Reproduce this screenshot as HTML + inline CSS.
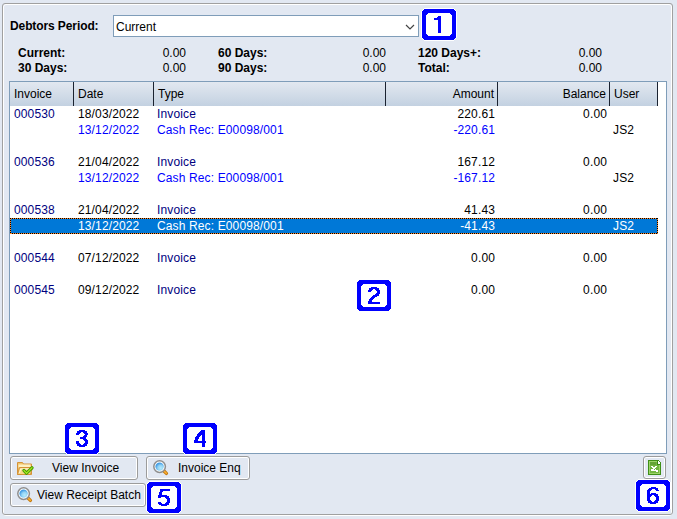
<!DOCTYPE html>
<html><head><meta charset="utf-8">
<style>
html,body{margin:0;padding:0;}
body{width:677px;height:519px;position:relative;overflow:hidden;background:#e2e8f2;font-family:"Liberation Sans",sans-serif;font-size:12px;color:#000;}
.a{position:absolute;}
.t{position:absolute;white-space:pre;line-height:14px;font-size:12px;}
.b{font-weight:bold;}
.r{text-align:right;}
.nv{color:#000080;}
.bl{color:#0000ff;}
.sel{color:#fff;}
.g{letter-spacing:0.13px;}
.hdr{position:absolute;top:82px;height:24px;background:linear-gradient(#e2e8f0,#c3d1e1);}
.sep{position:absolute;top:82px;width:1px;height:24px;background:#1a2230;}
.btn{position:absolute;box-sizing:border-box;border:1px solid #9c9c9c;border-radius:3px;background:#e2e8f2;box-shadow:inset 0 0 0 1px #fff;}
.lbl{position:absolute;box-sizing:border-box;width:34px;height:31px;border:4px solid #0000ff;border-radius:4px;background:#fff;outline:1px solid #fff;color:#0000ff;font-weight:bold;font-size:23px;line-height:23px;text-align:center;}
</style></head><body>
<!-- panel etched border -->
<div class="a" style="left:3px;top:4px;width:667px;height:510px;border:1px solid #fff;border-radius:3px;"></div>
<div class="a" style="left:2px;top:3px;width:669px;height:510px;border:1px solid #a0a0a0;border-radius:3px;"></div>

<div class="t b" style="left:10px;top:19px;letter-spacing:-0.1px;">Debtors Period:</div>
<div class="a" style="left:113px;top:15px;width:304px;height:20px;border:1px solid #7f9db9;background:#fff;"></div>
<div class="t" style="left:116px;top:20px;">Current</div>
<svg class="a" style="left:405px;top:24px;" width="10" height="7" viewBox="0 0 10 7"><path d="M1 1 L5 5 L9 1" fill="none" stroke="#444" stroke-width="1.2"/></svg>

<div class="t b" style="left:18px;top:46px;">Current:</div>
<div class="t b" style="left:18px;top:61px;">30 Days:</div>
<div class="t r" style="left:100px;width:86px;top:46px;">0.00</div>
<div class="t r" style="left:100px;width:86px;top:61px;">0.00</div>
<div class="t b" style="left:218px;top:46px;">60 Days:</div>
<div class="t b" style="left:218px;top:61px;">90 Days:</div>
<div class="t r" style="left:300px;width:86px;top:46px;">0.00</div>
<div class="t r" style="left:300px;width:86px;top:61px;">0.00</div>
<div class="t b" style="left:418px;top:46px;">120 Days+:</div>
<div class="t b" style="left:418px;top:61px;">Total:</div>
<div class="t r" style="left:516px;width:86px;top:46px;">0.00</div>
<div class="t r" style="left:516px;width:86px;top:61px;">0.00</div>

<!-- grid -->
<div class="a" style="left:9px;top:81px;width:656px;height:371px;border:1px solid #7f9db9;background:#fff;"></div>
<div class="hdr" style="left:10px;width:647px;"></div>
<div class="sep" style="left:73px;"></div>
<div class="sep" style="left:153px;"></div>
<div class="sep" style="left:385px;"></div>
<div class="sep" style="left:497px;"></div>
<div class="sep" style="left:609px;"></div>
<div class="sep" style="left:657px;"></div>
<div class="t" style="left:14px;top:87px;">Invoice</div>
<div class="t" style="left:78px;top:87px;">Date</div>
<div class="t" style="left:158px;top:87px;">Type</div>
<div class="t r" style="left:390px;width:104px;top:87px;">Amount</div>
<div class="t r" style="left:500px;width:106px;top:87px;">Balance</div>
<div class="t" style="left:614px;top:87px;">User</div>

<!--ROWS-->
<div class="a" style="left:10px;top:218px;width:648px;height:16px;background:#0078d7;"></div>
<div class="a" style="left:10px;top:218px;width:648px;height:1px;background:repeating-linear-gradient(90deg,#000 0 1px,#ff8828 1px 2px);"></div>
<div class="a" style="left:10px;top:233px;width:648px;height:1px;background:repeating-linear-gradient(90deg,#000 0 1px,#ff8828 1px 2px);"></div>
<div class="a" style="left:10px;top:218px;width:1px;height:16px;background:repeating-linear-gradient(180deg,#000 0 1px,#ff8828 1px 2px);"></div>
<div class="a" style="left:657px;top:218px;width:1px;height:16px;background:repeating-linear-gradient(180deg,#000 0 1px,#ff8828 1px 2px);"></div>
<div class="t g nv" style="left:14px;top:107px;">000530</div>
<div class="t g" style="left:78px;top:107px;">18/03/2022</div>
<div class="t g nv" style="left:157px;top:107px;">Invoice</div>
<div class="t r g" style="left:385px;width:110px;top:107px;">220.61</div>
<div class="t r g" style="left:497px;width:110px;top:107px;">0.00</div>
<div class="t g bl" style="left:78px;top:123px;">13/12/2022</div>
<div class="t g bl" style="left:157px;top:123px;">Cash Rec: E00098/001</div>
<div class="t r g bl" style="left:385px;width:110px;top:123px;">-220.61</div>
<div class="t g" style="left:613px;top:123px;">JS2</div>
<div class="t g nv" style="left:14px;top:155px;">000536</div>
<div class="t g" style="left:78px;top:155px;">21/04/2022</div>
<div class="t g nv" style="left:157px;top:155px;">Invoice</div>
<div class="t r g" style="left:385px;width:110px;top:155px;">167.12</div>
<div class="t r g" style="left:497px;width:110px;top:155px;">0.00</div>
<div class="t g bl" style="left:78px;top:171px;">13/12/2022</div>
<div class="t g bl" style="left:157px;top:171px;">Cash Rec: E00098/001</div>
<div class="t r g bl" style="left:385px;width:110px;top:171px;">-167.12</div>
<div class="t g" style="left:613px;top:171px;">JS2</div>
<div class="t g nv" style="left:14px;top:203px;">000538</div>
<div class="t g" style="left:78px;top:203px;">21/04/2022</div>
<div class="t g nv" style="left:157px;top:203px;">Invoice</div>
<div class="t r g" style="left:385px;width:110px;top:203px;">41.43</div>
<div class="t r g" style="left:497px;width:110px;top:203px;">0.00</div>
<div class="t g sel" style="left:78px;top:219px;">13/12/2022</div>
<div class="t g sel" style="left:157px;top:219px;">Cash Rec: E00098/001</div>
<div class="t r g sel" style="left:385px;width:110px;top:219px;">-41.43</div>
<div class="t g sel" style="left:613px;top:219px;">JS2</div>
<div class="t g nv" style="left:14px;top:251px;">000544</div>
<div class="t g" style="left:78px;top:251px;">07/12/2022</div>
<div class="t g nv" style="left:157px;top:251px;">Invoice</div>
<div class="t r g" style="left:385px;width:110px;top:251px;">0.00</div>
<div class="t r g" style="left:497px;width:110px;top:251px;">0.00</div>
<div class="t g nv" style="left:14px;top:283px;">000545</div>
<div class="t g" style="left:78px;top:283px;">09/12/2022</div>
<div class="t g nv" style="left:157px;top:283px;">Invoice</div>
<div class="t r g" style="left:385px;width:110px;top:283px;">0.00</div>
<div class="t r g" style="left:497px;width:110px;top:283px;">0.00</div>
<!--/ROWS-->

<!-- buttons -->
<div class="btn" style="left:10px;top:456px;width:128px;height:24px;"></div>
<div class="t" style="left:52px;top:461px;">View Invoice</div>
<svg class="a" style="left:17px;top:460px;" width="17" height="17" viewBox="0 0 17 17"><path d="M0.5,2.5 H5.5 L6.5,4 H14.5 V14.5 H0.5 Z" fill="#f2c66a" stroke="#d49238"/><rect x="1.5" y="4.5" width="12" height="3" fill="#fdf0c0"/><path d="M0.5,14.5 L2.5,7.5 H15.5 L13.5,14.5 Z" fill="#f8d888" stroke="#d49238"/><path d="M2.5,13 L3.6,9 H13" stroke="#fff6d8" fill="none"/><polyline points="7,10.5 9.5,13.2 15,7.8" fill="none" stroke="#3a9a00" stroke-width="3.2" stroke-linecap="round" stroke-linejoin="round"/><polyline points="7,10.5 9.5,13.2 15,7.8" fill="none" stroke="#a4e21c" stroke-width="1.3" stroke-linecap="round" stroke-linejoin="round"/></svg>
<div class="btn" style="left:146px;top:456px;width:104px;height:24px;"></div>
<div class="t" style="left:178px;top:461px;">Invoice Enq</div>
<svg class="a" style="left:153px;top:460px;" width="16" height="16" viewBox="0 0 16 16"><defs><radialGradient id="mg153" cx="0.62" cy="0.68" r="0.62"><stop offset="0" stop-color="#b4ecfc"/><stop offset="0.55" stop-color="#92d2f4"/><stop offset="1" stop-color="#3e9ae4"/></radialGradient></defs><path d="M11.2,11.2 L13.4,13.4" stroke="#c47c12" stroke-width="3.4" stroke-linecap="round"/><path d="M11.5,11.5 L13.3,13.3" stroke="#ffb030" stroke-width="1.4" stroke-linecap="round"/><circle cx="6.6" cy="6.6" r="5.8" fill="#fff" stroke="#8e8e8e" stroke-width="1.5"/><circle cx="6.6" cy="6.6" r="4.2" fill="url(#mg153)"/></svg>
<div class="btn" style="left:10px;top:483px;width:136px;height:24px;"></div>
<div class="t" style="left:37px;top:488px;">View Receipt Batch</div>
<svg class="a" style="left:17px;top:487px;" width="16" height="16" viewBox="0 0 16 16"><defs><radialGradient id="mg17" cx="0.62" cy="0.68" r="0.62"><stop offset="0" stop-color="#b4ecfc"/><stop offset="0.55" stop-color="#92d2f4"/><stop offset="1" stop-color="#3e9ae4"/></radialGradient></defs><path d="M11.2,11.2 L13.4,13.4" stroke="#c47c12" stroke-width="3.4" stroke-linecap="round"/><path d="M11.5,11.5 L13.3,13.3" stroke="#ffb030" stroke-width="1.4" stroke-linecap="round"/><circle cx="6.6" cy="6.6" r="5.8" fill="#fff" stroke="#8e8e8e" stroke-width="1.5"/><circle cx="6.6" cy="6.6" r="4.2" fill="url(#mg17)"/></svg>
<div class="btn" style="left:643px;top:456px;width:23px;height:23px;"></div>
<svg class="a" style="left:648px;top:460px;" width="13" height="15" viewBox="0 0 13 15" shape-rendering="crispEdges"><path d="M0,0 H10 L13,3 V15 H0 Z" fill="#3f8f18"/><path d="M1,1 H9.5 L12,3.5 V14 H1 Z" fill="#9cd468"/><rect x="2" y="2" width="9" height="11" fill="#72b642"/><rect x="2" y="2" width="6" height="3" fill="#64a436"/><path d="M9,1 V5 H12 V4 H10 V1 Z" fill="#3a8a14"/><path d="M10,1 H10.5 L12,2.5 V4 H10 Z" fill="#fff"/><rect x="3" y="6" width="2" height="1" fill="#fff"/><rect x="7" y="6" width="2" height="1" fill="#fff"/><rect x="4" y="7" width="4" height="1" fill="#fff"/><rect x="5" y="8" width="2" height="1" fill="#fff"/><rect x="3" y="9" width="3" height="1" fill="#fff"/><rect x="7" y="9" width="1" height="1" fill="#fff"/><rect x="3" y="10" width="7" height="1" fill="#fff"/><rect x="8" y="11" width="2" height="1" fill="#fff"/></svg>

<!-- labels -->
<!--LABELS-->
<svg class="a" style="left:421px;top:8px;" width="36" height="33" shape-rendering="crispEdges"><polygon points="3.5,0 32.5,0 36,3.5 36,29.5 32.5,33 3.5,33 0,29.5 0,3.5" fill="#fff"/><polygon points="3.5,1 32.5,1 35,3.5 35,29.5 32.5,32 3.5,32 1,29.5 1,3.5" fill="#0000ff"/><polygon points="7.5,5 28.5,5 31,7.5 31,25.5 28.5,28 7.5,28 5,25.5 5,7.5" fill="#fff"/><path d="M17,8h3v1h-3zM16,9h4v1h-4zM13,10h7v1h-7zM13,11h7v1h-7zM17,12h3v1h-3zM17,13h3v1h-3zM17,14h3v1h-3zM17,15h3v1h-3zM17,16h3v1h-3zM17,17h3v1h-3zM17,18h3v1h-3zM17,19h3v1h-3zM17,20h3v1h-3zM17,21h3v1h-3zM17,22h3v1h-3zM17,23h3v1h-3zM17,24h3v1h-3z" fill="#0000ff"/></svg>
<svg class="a" style="left:356px;top:279px;" width="36" height="33" shape-rendering="crispEdges"><polygon points="3.5,0 32.5,0 36,3.5 36,29.5 32.5,33 3.5,33 0,29.5 0,3.5" fill="#fff"/><polygon points="3.5,1 32.5,1 35,3.5 35,29.5 32.5,32 3.5,32 1,29.5 1,3.5" fill="#0000ff"/><polygon points="7.5,5 28.5,5 31,7.5 31,25.5 28.5,28 7.5,28 5,25.5 5,7.5" fill="#fff"/><path d="M15,8h6v1h-6zM13,9h10v1h-10zM13,10h4v1h-4zM19,10h4v1h-4zM12,11h4v1h-4zM20,11h4v1h-4zM12,12h3v1h-3zM21,12h3v1h-3zM21,13h3v1h-3zM20,14h4v1h-4zM19,15h4v1h-4zM17,16h6v1h-6zM16,17h5v1h-5zM15,18h4v1h-4zM14,19h4v1h-4zM13,20h4v1h-4zM13,21h3v1h-3zM12,22h4v1h-4zM12,23h12v1h-12zM12,24h12v1h-12z" fill="#0000ff"/></svg>
<svg class="a" style="left:64px;top:422px;" width="36" height="33" shape-rendering="crispEdges"><polygon points="3.5,0 32.5,0 36,3.5 36,29.5 32.5,33 3.5,33 0,29.5 0,3.5" fill="#fff"/><polygon points="3.5,1 32.5,1 35,3.5 35,29.5 32.5,32 3.5,32 1,29.5 1,3.5" fill="#0000ff"/><polygon points="7.5,5 28.5,5 31,7.5 31,25.5 28.5,28 7.5,28 5,25.5 5,7.5" fill="#fff"/><path d="M15,8h6v1h-6zM13,9h10v1h-10zM13,10h4v1h-4zM19,10h4v1h-4zM12,11h4v1h-4zM20,11h4v1h-4zM12,12h3v1h-3zM21,12h3v1h-3zM20,13h3v1h-3zM19,14h4v1h-4zM16,15h6v1h-6zM16,16h6v1h-6zM19,17h4v1h-4zM20,18h4v1h-4zM12,19h3v1h-3zM21,19h3v1h-3zM12,20h3v1h-3zM21,20h3v1h-3zM12,21h4v1h-4zM20,21h4v1h-4zM13,22h4v1h-4zM19,22h4v1h-4zM13,23h10v1h-10zM15,24h6v1h-6z" fill="#0000ff"/></svg>
<svg class="a" style="left:182px;top:422px;" width="36" height="33" shape-rendering="crispEdges"><polygon points="3.5,0 32.5,0 36,3.5 36,29.5 32.5,33 3.5,33 0,29.5 0,3.5" fill="#fff"/><polygon points="3.5,1 32.5,1 35,3.5 35,29.5 32.5,32 3.5,32 1,29.5 1,3.5" fill="#0000ff"/><polygon points="7.5,5 28.5,5 31,7.5 31,25.5 28.5,28 7.5,28 5,25.5 5,7.5" fill="#fff"/><path d="M19,8h4v1h-4zM18,9h5v1h-5zM17,10h6v1h-6zM16,11h7v1h-7zM15,12h8v1h-8zM15,13h4v1h-4zM20,13h3v1h-3zM14,14h4v1h-4zM20,14h3v1h-3zM13,15h4v1h-4zM20,15h3v1h-3zM13,16h4v1h-4zM20,16h3v1h-3zM13,17h3v1h-3zM20,17h3v1h-3zM12,18h4v1h-4zM20,18h3v1h-3zM12,19h12v1h-12zM12,20h12v1h-12zM20,21h3v1h-3zM20,22h3v1h-3zM20,23h3v1h-3zM20,24h3v1h-3z" fill="#0000ff"/></svg>
<svg class="a" style="left:146px;top:481px;" width="36" height="33" shape-rendering="crispEdges"><polygon points="3.5,0 32.5,0 36,3.5 36,29.5 32.5,33 3.5,33 0,29.5 0,3.5" fill="#fff"/><polygon points="3.5,1 32.5,1 35,3.5 35,29.5 32.5,32 3.5,32 1,29.5 1,3.5" fill="#0000ff"/><polygon points="7.5,5 28.5,5 31,7.5 31,25.5 28.5,28 7.5,28 5,25.5 5,7.5" fill="#fff"/><path d="M14,8h10v1h-10zM14,9h10v1h-10zM14,10h3v1h-3zM13,11h3v1h-3zM13,12h3v1h-3zM13,13h3v1h-3zM12,14h9v1h-9zM12,15h11v1h-11zM12,16h3v1h-3zM19,16h4v1h-4zM20,17h4v1h-4zM21,18h3v1h-3zM21,19h3v1h-3zM21,20h3v1h-3zM12,21h3v1h-3zM20,21h4v1h-4zM12,22h4v1h-4zM19,22h4v1h-4zM13,23h10v1h-10zM15,24h6v1h-6z" fill="#0000ff"/></svg>
<svg class="a" style="left:635px;top:479px;" width="36" height="33" shape-rendering="crispEdges"><polygon points="3.5,0 32.5,0 36,3.5 36,29.5 32.5,33 3.5,33 0,29.5 0,3.5" fill="#fff"/><polygon points="3.5,1 32.5,1 35,3.5 35,29.5 32.5,32 3.5,32 1,29.5 1,3.5" fill="#0000ff"/><polygon points="7.5,5 28.5,5 31,7.5 31,25.5 28.5,28 7.5,28 5,25.5 5,7.5" fill="#fff"/><path d="M16,8h5v1h-5zM14,9h9v1h-9zM13,10h4v1h-4zM20,10h3v1h-3zM12,11h4v1h-4zM21,11h3v1h-3zM12,12h3v1h-3zM12,13h3v1h-3zM12,14h3v1h-3zM16,14h5v1h-5zM12,15h11v1h-11zM12,16h5v1h-5zM19,16h4v1h-4zM12,17h4v1h-4zM20,17h4v1h-4zM12,18h3v1h-3zM21,18h3v1h-3zM12,19h3v1h-3zM21,19h3v1h-3zM12,20h3v1h-3zM21,20h3v1h-3zM12,21h4v1h-4zM20,21h4v1h-4zM13,22h4v1h-4zM19,22h4v1h-4zM13,23h10v1h-10zM15,24h6v1h-6z" fill="#0000ff"/></svg>
<!--/LABELS-->
</body></html>
